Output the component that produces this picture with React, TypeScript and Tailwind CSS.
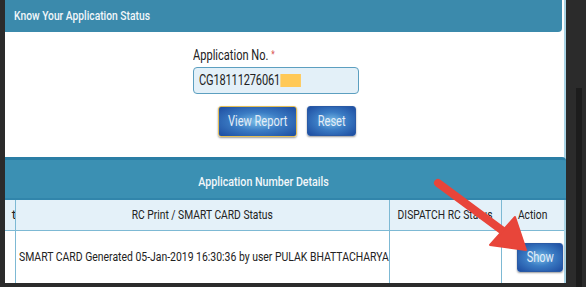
import type { ReactNode } from 'react';

// the screenshot is squeezed horizontally, so text gets a narrow scale
function Narrow({ children, left = false }: { children: ReactNode; left?: boolean }) {
  return (
    <span
      className={`inline-block whitespace-nowrap scale-x-[0.79] ${left ? 'origin-left' : 'origin-center'}`}
    >
      {children}
    </span>
  );
}

export default function App() {
  const font = { fontFamily: 'Roboto, "DejaVu Sans Condensed", sans-serif' };
  const btn =
    'flex items-center justify-center text-[14px] text-[#e4edf7] rounded-[3px] bg-[radial-gradient(ellipse_at_center,#78bde8_0%,#3b7cc4_45%,#1d4ca0_100%)] shadow-[0_1px_2px_rgba(0,0,0,0.4)]';

  return (
    <div className="relative w-[586px] h-[287px] bg-[#2b2b2b] overflow-hidden" style={font}>
      {/* scrollbar shadow on the right */}
      <div className="absolute left-[576px] top-[88px] w-[6px] h-[199px] bg-[#1c1c1c]" />

      <div className="ml-[5px] w-[561px] h-[283px] bg-white border-r-2 border-[#a9d3e4] flex flex-col">
        <div className="h-[32px] shrink-0 mr-[2px] bg-[#3b8aac] rounded-br-[4px] flex items-center pl-[9px] text-[13px] font-medium text-[#f2f7fa]">
          <Narrow left>Know Your Application Status</Narrow>
        </div>

        <div className="h-[125px] shrink-0 flex flex-col">
          <div className="ml-[188px] mt-[14px] text-[14px] text-[#222] leading-[18px]">
            <Narrow left>
              Application No. <span className="text-[#d9534f] text-[10px] align-top">*</span>
            </Narrow>
          </div>
          <div className="ml-[188px] mt-[3px] w-[166px] h-[27px] bg-[#e3f0f8] border border-[#5c9fc0] rounded-[4px] flex items-center pl-[5px] text-[14px] text-[#222]">
            <Narrow left>
              <span className="flex items-center tracking-[-0.2px]">
                CG18111276061
                <span className="inline-block w-[26px] h-[13px] bg-[#ffc957]" />
              </span>
            </Narrow>
          </div>
          <div className="ml-[213px] mt-[12px] flex gap-[10px]">
            <div className={`${btn} w-[79px] h-[31px] border border-[#e2bd55]`}>
              <Narrow>View Report</Narrow>
            </div>
            <div className={`${btn} w-[49px] h-[30px] border border-[#2a5aa5]`}>
              <Narrow>Reset</Narrow>
            </div>
          </div>
        </div>

        <div className="h-[43px] shrink-0 -mr-[2px] bg-[#3b90b3] border-t-[3px] border-b-2 border-t-[#2a7ea5] border-b-[#3185ab] rounded-tr-[4px] flex items-end justify-center pb-[7px] pr-[43px] text-[13.5px] font-medium text-[#f2f7fa]">
          <Narrow>Application Number Details</Narrow>
        </div>

        <div className="grid grid-cols-[11px_374px_112px_1fr] grid-rows-[31px_1fr] text-[13px] text-[#222] flex-1">
          <div className="bg-[#e4f1f9] border-r border-b border-[#7db9d4] flex items-center justify-end overflow-hidden">
            <span className="-mr-[1px]">t</span>
          </div>
          <div className="bg-[#e4f1f9] border-r border-b border-[#7db9d4] flex items-center justify-center">
            <Narrow>RC Print / SMART CARD Status</Narrow>
          </div>
          <div className="bg-[#e4f1f9] border-r border-b border-[#7db9d4] flex items-center justify-center">
            <Narrow>DISPATCH RC Status</Narrow>
          </div>
          <div className="bg-[#e4f1f9] border-b border-[#7db9d4] flex items-center justify-center">
            <Narrow>Action</Narrow>
          </div>

          <div className="border-r border-[#7db9d4]" />
          <div className="border-r border-[#7db9d4] flex items-center pl-[3px] text-[13.2px]">
            <Narrow left>SMART CARD Generated 05-Jan-2019 16:30:36 by user PULAK BHATTACHARYA</Narrow>
          </div>
          <div className="border-r border-[#7db9d4]" />
          <div className="flex items-center justify-end pr-[1px]">
            <div className={`${btn} w-[46px] h-[29px] border border-[#2a5aa5]`}>
              <Narrow>Show</Narrow>
            </div>
          </div>
        </div>
      </div>

      <svg className="absolute left-0 top-0" width="586" height="287" viewBox="0 0 586 287">
        <line x1="438" y1="183" x2="503" y2="231" stroke="#e8453a" strokeWidth="8" strokeLinecap="round" />
        <polygon points="526,250 490,245 515,217" fill="#e8453a" stroke="#e8453a" strokeWidth="2" strokeLinejoin="round" />
      </svg>
    </div>
  );
}
